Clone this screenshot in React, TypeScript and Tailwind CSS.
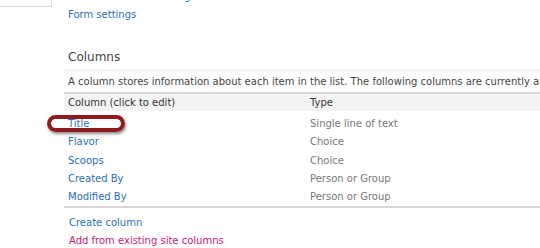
import React from 'react';

const columns = [
  { name: 'Title', type: 'Single line of text' },
  { name: 'Flavor', type: 'Choice' },
  { name: 'Scoops', type: 'Choice' },
  { name: 'Created By', type: 'Person or Group' },
  { name: 'Modified By', type: 'Person or Group' },
];

export default function App() {
  return (
    <div className="relative flex w-[540px] h-[248px] overflow-hidden bg-white text-[10px] text-[#444] font-['DejaVu_Sans',Verdana,sans-serif]">
      {/* left nav stub */}
      <div className="w-[64px] shrink-0">
        <div className="w-[52px] h-[7px] border-r border-b border-[#d8d8d8]" />
      </div>

      <div className="flex-1 min-w-0 flex flex-col">
        <div className="pl-[4px] -mt-[12px] leading-[18px] text-[#2a6fb8]">
          <div>Per-location view settings</div>
          <div>Form settings</div>
        </div>

        <div className="pl-[4px] mt-[25px] text-[12px] leading-[16px] text-[#444]">Columns</div>
        <div className="mt-[5px] border-t border-[#ececec] pl-[4px] leading-[21px] whitespace-nowrap">
          A column stores information about each item in the list. The following columns are currently available in this list:
        </div>

        <div className="border-t-2 border-[#d6d6d6] bg-[#f3f3f3] flex leading-[17px] text-[#333]">
          <div className="w-[246px] pl-[4px]">Column (click to edit)</div>
          <div>Type</div>
        </div>

        <div className="relative pt-[4px] border-b-2 border-[#d6d6d6]">
          {columns.map((c) => (
            <div key={c.name} className="flex leading-[18.25px]">
              <div className="w-[246px] pl-[4px] text-[#2a6fb8]">{c.name}</div>
              <div className="text-[#777]">{c.type}</div>
            </div>
          ))}
          {/* highlight callout */}
          <div className="absolute left-[-17px] top-[4px] w-[78px] h-[17px] rounded-[9px] border-[4px] border-[#8e1b1f] shadow-[1px_2px_3px_rgba(0,0,0,0.45)]" />
        </div>

        <div className="pl-[5px] pt-[6px] leading-[18px]">
          <div className="text-[#2a6fb8]">Create column</div>
          <div className="text-[#c2197a]">Add from existing site columns</div>
        </div>
      </div>
    </div>
  );
}
